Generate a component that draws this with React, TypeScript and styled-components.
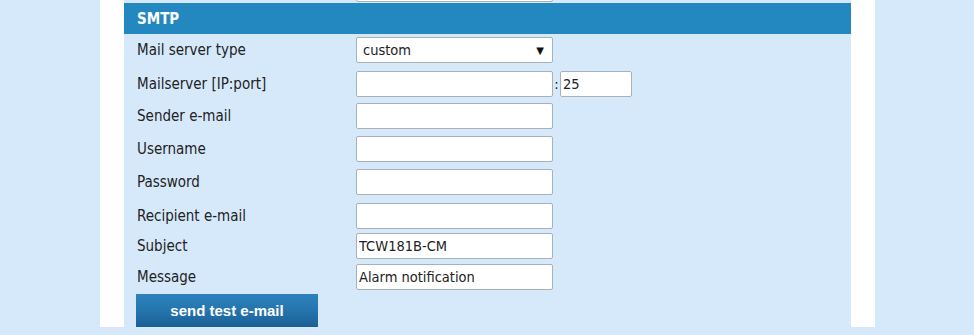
import React from "react";
import styled, { createGlobalStyle } from "styled-components";

const Global = createGlobalStyle`
  html, body { margin: 0; padding: 0; background: #d6e9fb; overflow: hidden; }
  body { font-family: "DejaVu Sans Condensed", "DejaVu Sans", sans-serif; font-size: 15px; color: #222; }
`;

const Column = styled.div`
  margin-left: 100px;
  width: 727px;
  padding: 0 24px;
  background: #ffffff;
  min-height: 335px;
`;

const Panel = styled.div`
  background: #d6e9fb;
  min-height: 335px;
  margin-top: -26px;
`;

const Row = styled.div<{ $h: number }>`
  display: grid;
  grid-template-columns: 232px auto;
  align-items: start;
  height: ${(p) => p.$h}px;
  padding-top: 2px;
  box-sizing: border-box;
`;

const Label = styled.label`
  padding-left: 13px;
  height: 26px;
  display: flex;
  align-items: center;
  font-size: 15px;
  color: #222;
`;

const Header = styled.div`
  height: 31px;
  background: #2387c0;
  color: #fff;
  font-weight: bold;
  font-size: 15px;
  display: flex;
  align-items: center;
  padding-left: 13px;
  margin: 2px 0 1px;
`;

const Field = styled.div`
  display: flex;
  align-items: center;
`;

const Input = styled.input<{ $w?: number }>`
  box-sizing: border-box;
  width: ${(p) => p.$w ?? 197}px;
  height: 26px;
  border: 1px solid #a8b0b8;
  border-radius: 2px;
  background: #fff;
  font-family: inherit;
  font-size: 14.5px;
  color: #222;
  padding: 0 2px;
  margin: 0;
  outline: none;
`;

const Select = styled.div`
  box-sizing: border-box;
  width: 197px;
  height: 26px;
  border: 1px solid #a8b0b8;
  border-radius: 2px;
  background: #fff;
  display: flex;
  align-items: center;
  justify-content: space-between;
  padding: 0 8px 0 6px;
  font-size: 14.5px;
`;

const Arrow = styled.span`
  font-size: 10px;
  color: #111;
  font-family: "DejaVu Sans", sans-serif;
`;

const Colon = styled.span`
  width: 7px;
  text-align: center;
  font-size: 14.5px;
`;

const ButtonRow = styled.div`
  padding: 2px 0 0 12px;
`;

const Button = styled.button`
  width: 182px;
  height: 33px;
  border: none;
  border-radius: 0;
  background: linear-gradient(#2d82bb, #2575ae 50%, #1b5e95);
  color: #fff;
  font-family: "Liberation Sans", Arial, sans-serif;
  font-weight: bold;
  font-size: 15px;
  cursor: pointer;
`;

const rows: { label: string; h: number; value?: string }[] = [
  { label: "Sender e-mail", h: 33 },
  { label: "Username", h: 33 },
  { label: "Password", h: 34 },
  { label: "Recipient e-mail", h: 30 },
  { label: "Subject", h: 31, value: "TCW181B-CM" },
  { label: "Message", h: 30, value: "Alarm notification" },
];

export default function App() {
  return (
    <>
      <Global />
      <Column>
        <Panel>
          <Row $h={27}>
            <span />
            <Input readOnly />
          </Row>
          <Header>SMTP</Header>
          <Row $h={34}>
            <Label>Mail server type</Label>
            <Select>
              <span>custom</span>
              <Arrow>▼</Arrow>
            </Select>
          </Row>
          <Row $h={32}>
            <Label>Mailserver [IP:port]</Label>
            <Field>
              <Input readOnly />
              <Colon>:</Colon>
              <Input $w={72} readOnly defaultValue="25" />
            </Field>
          </Row>
          {rows.map((r) => (
            <Row key={r.label} $h={r.h}>
              <Label>{r.label}</Label>
              <Input readOnly defaultValue={r.value ?? ""} />
            </Row>
          ))}
          <ButtonRow>
            <Button>send test e-mail</Button>
          </ButtonRow>
        </Panel>
      </Column>
    </>
  );
}
